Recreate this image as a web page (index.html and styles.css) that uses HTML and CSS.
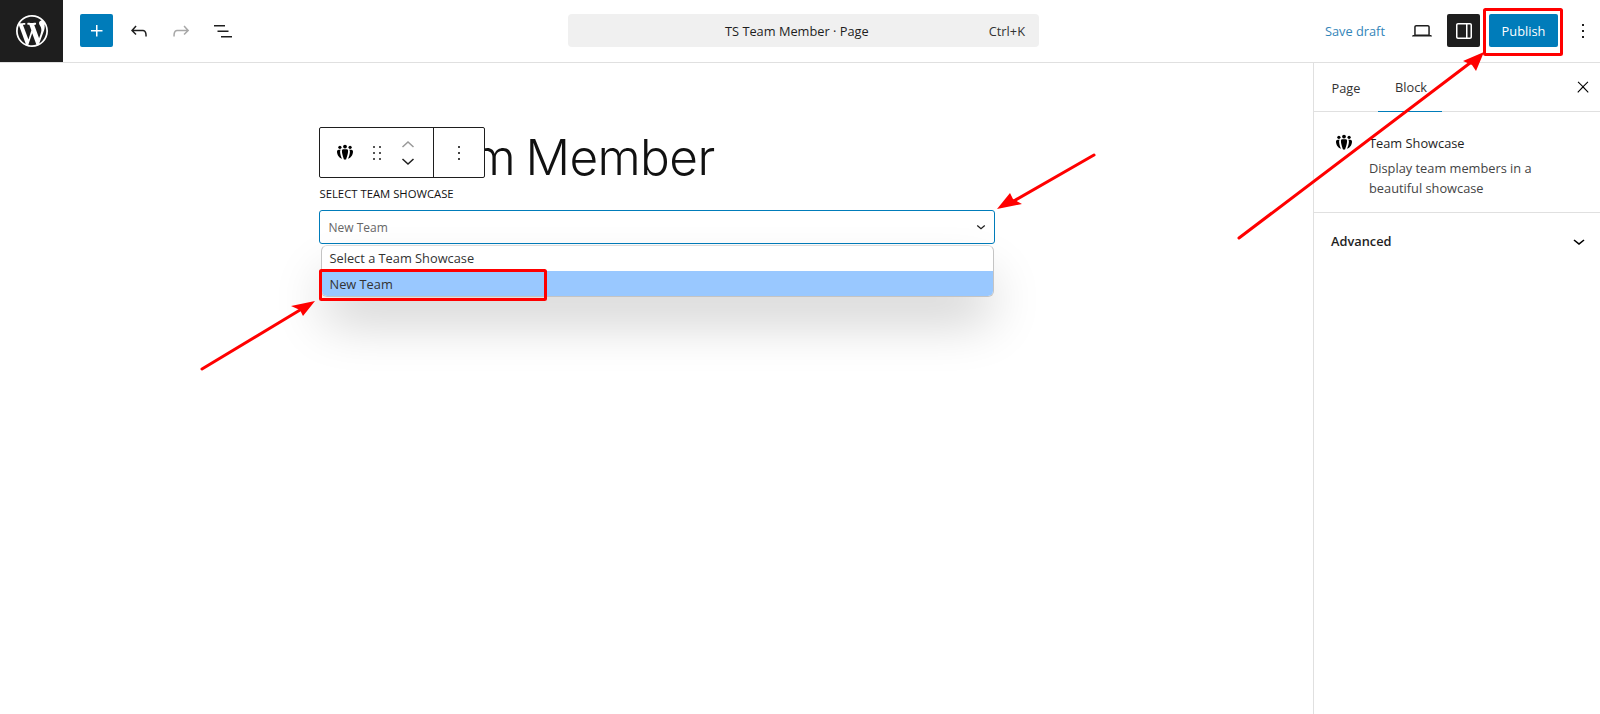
FILE: index.html
```html
<!DOCTYPE html>
<html lang="en">
<head>
<meta charset="utf-8">
<title>TS Team Member</title>
<link rel="stylesheet" href="styles.css">
</head>
<body>
<div class="app">
  <header class="topbar">
    <a class="logo"><svg viewBox="0 0 20 20" width="32" height="32"><path fill="#fff" d="M20 10c0-5.51-4.49-10-10-10C4.48 0 0 4.49 0 10c0 5.52 4.48 10 10 10 5.51 0 10-4.48 10-10zM7.78 15.37L4.37 6.22c.55-.02 1.17-.08 1.17-.08.5-.06.44-1.13-.06-1.11 0 0-1.45.11-2.37.11-.18 0-.37 0-.58-.01C4.12 2.69 6.87 1.11 10 1.11c2.33 0 4.45.87 6.05 2.34-.68-.11-1.65.39-1.65 1.58 0 .74.45 1.36.9 2.1.35.61.55 1.36.55 2.46 0 1.49-1.4 5-1.4 5l-3.03-8.37c.54-.02.82-.17.82-.17.5-.05.44-1.25-.06-1.22 0 0-1.44.12-2.38.12-.87 0-2.33-.12-2.33-.12-.5-.03-.56 1.2-.06 1.22l.92.08 1.26 3.41zM17.41 10c.24-.64.74-1.87.43-4.25.7 1.29 1.05 2.71 1.05 4.25 0 3.29-1.73 6.24-4.4 7.78.97-2.59 1.94-5.2 2.92-7.78zM6.1 18.09C3.12 16.65 1.11 13.53 1.11 10c0-1.3.23-2.48.72-3.59C3.25 10.3 4.67 14.2 6.1 18.09zm4.03-6.63l2.58 6.98c-.86.29-1.76.45-2.71.45-.79 0-1.57-.11-2.29-.33.81-2.38 1.62-4.72 2.42-7.1z"/></svg></a>
    <div class="tools">
      <span class="btn-add"><svg viewBox="0 0 24 24" width="24" height="24"><path fill="#fff" d="M11 12.5V17.5H12.5V12.5H17.5V11H12.5V6H11V11H6V12.5H11Z"/></svg></span>
      <span class="tool"><svg viewBox="0 0 24 24" width="24" height="24"><path d="M18.3 11.7c-.6-.6-1.4-.9-2.3-.9H6.7l2.9-3.3-1.1-1-4.5 5L8.5 16l1-1-2.7-2.7H16c.5 0 .9.2 1.3.5 1 1 1 3.4 1 4.5v.3h1.5v-.2c0-1.5 0-4.3-1.5-5.7z"/></svg></span>
      <span class="tool muted"><svg viewBox="0 0 24 24" width="24" height="24"><path d="M15.6 6.5l-1.1 1 2.9 3.3H8c-.9 0-1.7.3-2.3.9-1.4 1.5-1.4 4.2-1.4 5.6v.2h1.5v-.3c0-1.1 0-3.5 1-4.5.3-.3.7-.5 1.3-.5h9.2L14.5 15l1.1 1.1 4.6-4.6-4.6-5z"/></svg></span>
      <span class="tool"><svg viewBox="0 0 24 24" width="24" height="24"><path d="M3 6h11v1.5H3V6Zm3.5 5.5h11V13h-11v-1.5ZM21 17H10v1.5h11V17Z"/></svg></span>
    </div>
    <div class="command">
      <span class="command-title">TS Team Member · Page</span>
      <span class="command-key">Ctrl+K</span>
    </div>
    <div class="actions">
      <span class="save">Save draft</span>
      <span class="tool device"><svg viewBox="0 0 24 24" width="24" height="24"><path d="M20.5 16h-.7V8c0-1.1-.9-2-2-2H6.200c-1.100 0-2 .9-2 2v8h-.7c-.8 0-1.500.7-1.500 1.500h20c0-.8-.7-1.500-1.500-1.500zM5.700 8c0-.3.2-.5.5-.5h11.600c.3 0 .5.2.5.5v7.600H5.700V8z"/></svg></span>
      <span class="btn-panel"><svg viewBox="0 0 24 24" width="24" height="24"><path fill="#fff" d="M18 4H6c-1.100 0-2 .9-2 2v12c0 1.100.9 2 2 2h12c1.100 0 2-.9 2-2V6c0-1.100-.9-2-2-2zm-4 14.500H6c-.3 0-.5-.2-.5-.5V6c0-.3.2-.5.5-.5h8v13zm4.500-.5c0 .3-.2.5-.5.5h-2.500v-13H18c.3 0 .5.2.5.5v12z"/></svg></span>
      <span class="btn-publish">Publish</span>
      <span class="tool more"><svg viewBox="0 0 24 24" width="24" height="24"><path d="M13 19h-2v-2h2v2zm0-6h-2v-2h2v2zm0-6h-2V5h2v2z"/></svg></span>
    </div>
  </header>
  <div class="main">
    <main class="canvas">
      <div class="column">
        <h1 class="page-title">TS Team Member</h1>
        <div class="block-toolbar">
          <div class="bt-group bt-main">
            <svg viewBox="0 0 20 20" width="20" height="20"><use href="#team"/></svg>
            <svg class="bt-drag" viewBox="0 0 24 24" width="24" height="24"><path fill="#555" d="M8 7h2V5H8v2zm0 6h2v-2H8v2zm0 6h2v-2H8v2zm6-14v2h2V5h-2zm0 8h2v-2h-2v2zm0 6h2v-2h-2v2z"/></svg>
            <span class="movers">
              <svg viewBox="0 0 18 10" width="18" height="10"><path fill="none" stroke="#999" stroke-width="1.5" d="M3.500 8 9 3l5.500 5"/></svg>
              <svg viewBox="0 0 18 10" width="18" height="10"><path fill="none" stroke="#1e1e1e" stroke-width="1.5" d="M3.500 2 9 7l5.500-5"/></svg>
            </span>
          </div>
          <div class="bt-group bt-more">
            <svg viewBox="0 0 24 24" width="24" height="24"><path fill="#444" d="M13 19h-2v-2h2v2zm0-6h-2v-2h2v2zm0-6h-2V5h2v2z"/></svg>
          </div>
        </div>
        <label class="field-label">SELECT TEAM SHOWCASE</label>
        <div class="select">
          <span>New Team</span>
          <svg viewBox="0 0 12 8" width="10" height="7"><path fill="none" stroke="#1e1e1e" stroke-width="1.500" d="M1.500 1.500 6 5.500l4.500-4"/></svg>
        </div>
        <div class="dropdown">
          <div class="option">Select a Team Showcase</div>
          <div class="option active">New Team</div>
        </div>
      </div>
    </main>
    <aside class="sidebar">
      <div class="tabs">
        <span class="tab">Page</span>
        <span class="tab current">Block</span>
        <svg class="close" viewBox="0 0 24 24" width="18" height="18"><path d="M13 11.800l6.100-6.300-1-1-6.100 6.200-6.100-6.200-1 1 6.100 6.300-6.500 6.700 1 1 6.500-6.600 6.500 6.600 1-1z"/></svg>
      </div>
      <section class="block-card">
        <svg viewBox="0 0 20 20" width="20" height="20"><use href="#team"/></svg>
        <div>
          <div class="card-title">Team Showcase</div>
          <p class="card-desc">Display team members in a beautiful showcase</p>
        </div>
      </section>
      <section class="panel-row">
        <span>Advanced</span>
        <svg viewBox="0 0 24 24" width="24" height="24"><path d="M17.500 11.600 12 16.100l-5.500-4.500 1-1.200 4.500 3.600 4.500-3.600z"/></svg>
      </section>
    </aside>
  </div>
</div>
<svg class="defs" width="0" height="0"><defs>
  <g id="team"><circle cx="10" cy="3.600" r="1.900"/><circle cx="4.900" cy="4.300" r="1.600"/><circle cx="15.100" cy="4.300" r="1.600"/><path d="M6.900 7.800c0-.8.600-1.500 1.400-1.500h3.400c.8 0 1.400.7 1.400 1.500 0 2.800-1.200 6.300-2.100 8.700H9C8.100 14.100 6.900 10.600 6.900 7.800z"/><path d="M2 8.600c0-1.100.7-1.900 1.700-1.900h2.100c-.5.400-.7 1-.7 1.700 0 2.500.8 5 1.900 7.300C3.900 15 2 11.700 2 8.600zM18 8.600c0-1.100-.7-1.900-1.700-1.900h-2.100c.5.400.7 1 .7 1.700 0 2.500-.8 5-1.900 7.300C16.100 15 18 11.700 18 8.600z"/></g>
</defs></svg>
<svg class="annotations" viewBox="0 0 1600 714" width="1600" height="714">
  <g fill="none" stroke="#f00" stroke-width="3">
    <rect x="1484.500" y="9.500" width="77" height="45" rx="1"/>
    <rect x="320.500" y="270.500" width="225" height="29" rx="1"/>
    <path stroke-linecap="round" d="M1239 238 1470 63M1094 155 1012 202M202 369 300 310"/>
  </g>
  <g fill="#f00">
    <path d="M1484 52 1476 71 1472 65 1463 61Z"/>
    <path d="M997 209 1010 193 1013 199 1022 204Z"/>
    <path d="M315 301 303 316 300 310 291 306Z"/>
  </g>
</svg>
</body>
</html>
```
FILE: styles.css
```css
* { box-sizing: border-box; }
html, body { margin: 0; height: 100%; overflow: hidden; background: #fff; }
body { font-family: "Open Sans", "Noto Sans", sans-serif; font-size: 12.8px; color: #1e1e1e; position: relative; }
svg { display: block; flex: none; }
.app { height: 714px; display: flex; flex-direction: column; }
.topbar { height: 63px; flex: none; display: flex; align-items: center; border-bottom: 1px solid #e0e0e0; }
.logo { width: 63px; height: 62px; background: #1e1e1e; display: flex; align-items: center; justify-content: center; flex: none; }
.tools { display: flex; align-items: center; margin: 0 0 1px 17px; gap: 9px; }
.btn-add { width: 33px; height: 33px; background: #007cba; border-radius: 2px; display: flex; align-items: center; justify-content: center; }
.tool { width: 33px; height: 33px; display: flex; align-items: center; justify-content: center; fill: #1e1e1e; }
.tool.muted { fill: #a8a8a8; }
.command { width: 471px; height: 33px; margin: 0 0 1px 329px; background: #f0f0f0; border-radius: 4px; display: flex; align-items: center; padding: 0 14px 0 157px; }
.command-title { flex: 1; color: #1e1e1e; }
.command-key { color: #333; }
.actions { display: flex; align-items: center; margin: 0 0 1px auto; }
.save { color: #3385b9; margin-right: 20px; }
.device { margin-right: 9px; }
.btn-panel { width: 33px; height: 33px; background: #1e1e1e; border-radius: 2px; display: flex; align-items: center; justify-content: center; margin-right: 9px; }
.btn-publish { width: 69px; height: 33px; background: #007cba; color: #fff; border-radius: 2px; display: flex; align-items: center; justify-content: center; font-weight: 500; margin-right: 8px; }
.more { width: 34px; }
.main { flex: 1; display: flex; min-height: 0; }
.canvas { flex: 1; min-width: 0; }
.column { width: 676px; margin: 0 auto; position: relative; padding-top: 67px; }
.page-title { margin: 0; font-family: Inter, sans-serif; font-weight: 300; font-size: 49.500px; letter-spacing: -.6px; word-spacing: -3px; line-height: 55px; color: #111; }
.block-toolbar { position: absolute; left: 0; top: 64px; width: 166px; height: 51px; background: #fff; border: 1px solid #1e1e1e; border-radius: 2px; display: flex; align-items: center; }
.bt-group { height: 100%; display: flex; align-items: center; }
.bt-main { width: 114px; padding-left: 15px; gap: 8px; border-right: 1px solid #1e1e1e; }
.bt-drag { margin-left: 2px; }
.bt-more { flex: 1; justify-content: center; }
.movers { display: flex; flex-direction: column; gap: 8px; margin-left: 2px; }
.field-label { display: block; font-size: 11.300px; line-height: 14px; font-weight: 500; color: #111; margin: 2px 0 0 1px; }
.select { height: 34px; margin-top: 9px; border: 1px solid #007cba; border-radius: 3px; display: flex; align-items: center; justify-content: space-between; padding: 1px 8px 0 9px; font-size: 12px; color: #666; background: #fff; }
.dropdown { margin: 1px 1px 0 2px; height: 52px; border: 1px solid #c4c4c4; border-top-color: #ddd; border-radius: 6px; background: #fff; overflow: hidden; box-shadow: 0 28px 52px -4px rgba(0,0,0,.2); }
.option { height: 25px; padding-left: 8px; line-height: 25px; color: #333; }
.option.active { background: #99c8ff; height: 26px; padding-top: 1px; }
.sidebar { width: 287px; flex: none; border-left: 1px solid #e0e0e0; }
.tabs { height: 49px; border-bottom: 1px solid #e0e0e0; display: flex; align-items: stretch; }
.tab { width: 64px; display: flex; align-items: center; justify-content: center; color: #333; margin-bottom: -1px; }
.tab.current { border-bottom: 1.500px solid #007cba; padding-left: 2px; }
.close { margin: auto 8px auto auto; }
.block-card { display: flex; gap: 15px; padding: 21px 20px 13px; border-bottom: 1px solid #e0e0e0; height: 101px; }
.card-title { font-weight: 500; line-height: 20px; }
.card-desc { margin: 5px 0 0; line-height: 20px; color: #444; }
.panel-row { height: 55px; display: flex; align-items: center; justify-content: space-between; padding: 0 9px 0 17px; font-weight: 600; }
.defs { position: absolute; }
.annotations { position: absolute; left: 0; top: 0; pointer-events: none; }
```
